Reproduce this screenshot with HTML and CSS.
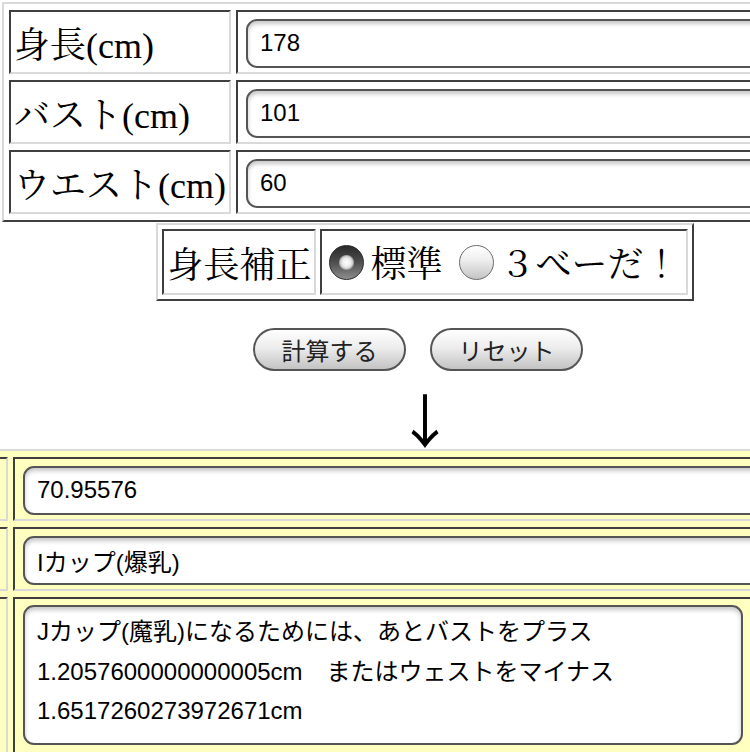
FILE: index.html
```html
<!DOCTYPE html>
<html lang="ja">
<head>
<meta charset="utf-8">
<title>カップ計算</title>
<link rel="stylesheet" href="styles.css">
</head>
<body>
<div class="page">
  <table class="grid input-table">
    <tr>
      <td class="label">身長(cm)</td>
      <td class="field"><input class="box" type="text" value="178"></td>
    </tr>
    <tr>
      <td class="label">バスト(cm)</td>
      <td class="field"><input class="box" type="text" value="101"></td>
    </tr>
    <tr>
      <td class="label">ウエスト(cm)</td>
      <td class="field"><input class="box" type="text" value="60"></td>
    </tr>
  </table>

  <table class="grid mode-table">
    <tr>
      <td class="mode-label">身長補正</td>
      <td class="mode-options"><label class="opt"><input class="radio" type="radio" name="mode" checked>標準</label> <label class="opt"><input class="radio" type="radio" name="mode">３べーだ！</label></td>
    </tr>
  </table>

  <div class="buttons">
    <button class="btn" type="button">計算する</button>
    <button class="btn" type="button">リセット</button>
  </div>

  <div class="arrow">↓</div>

  <div class="result-wrap">
    <table class="grid result-table">
      <colgroup>
        <col class="c1">
        <col class="c2">
      </colgroup>
      <tr>
        <td class="rlabel"></td>
        <td class="field"><input class="box wide" type="text" value="70.95576"></td>
      </tr>
      <tr>
        <td class="rlabel"></td>
        <td class="field"><input class="box wide" type="text" value="Iカップ(爆乳)"></td>
      </tr>
      <tr>
        <td class="rlabel"></td>
        <td class="field tall"><textarea class="box note" readonly>Jカップ(魔乳)になるためには、あとバストをプラス
1.2057600000000005cm　またはウェストをマイナス
1.6517260273972671cm</textarea></td>
      </tr>
    </table>
  </div>
</div>
</body>
</html>
```

FILE: styles.css
```css
html, body {
  margin: 0;
  padding: 0;
  overflow: hidden;
  background: #ffffff;
}

.page {
  width: 850px;
  display: flex;
  flex-direction: column;
  font-family: "Liberation Serif", "Noto Serif CJK JP", "Noto Sans CJK JP", serif;
  color: #000;
}

.grid {
  border-style: solid;
  border-width: 2px;
  border-color: #d9d9d9 #3f3f3f #3f3f3f #d9d9d9;
}

.grid td {
  border-style: solid;
  border-width: 2px;
  border-color: #3f3f3f #d9d9d9 #d9d9d9 #3f3f3f;
  padding: 0;
  vertical-align: middle;
}

/* top input table */
.input-table {
  align-self: flex-start;
  margin: 2px 0 0 2px;
  border-spacing: 5px 6px;
}

.input-table td {
  height: 60px;
}

.label {
  width: 211px;
  padding: 0 3px !important;
  font-size: 36px;
  white-space: nowrap;
}

.field {
  padding: 0 8px !important;
}

.box {
  display: block;
  box-sizing: border-box;
  width: 600px;
  height: 49px;
  margin: 2px 0 0 0;
  padding: 0 12px;
  border: 2px solid #555;
  border-radius: 11px;
  background: #fff;
  box-shadow: inset 0 3px 4px rgba(0, 0, 0, 0.22);
  font-family: "Liberation Sans", "Noto Sans CJK JP", sans-serif;
  font-size: 24px;
  color: #000;
  outline: none;
}

/* mode table */
.mode-table {
  align-self: center;
  margin-top: 1px;
  border-spacing: 4px;
}

.mode-table td {
  height: 62px;
}

.mode-label {
  padding: 0 3px !important;
  font-size: 36px;
  white-space: nowrap;
}

.mode-options {
  padding: 0 6px 0 0 !important;
  font-size: 36px;
  white-space: nowrap;
}

.opt {
  display: inline-flex;
  align-items: center;
}

.radio {
  appearance: none;
  -webkit-appearance: none;
  width: 35px;
  height: 35px;
  margin: 2px 6px 0 7px;
  border-radius: 50%;
  box-sizing: border-box;
  border: 1.5px solid #6b6b6b;
  background: linear-gradient(#ffffff, #f0f0f0 40%, #c4c4c4);
}

.radio:checked {
  border-color: #2a2a2a;
  background:
    radial-gradient(circle at 50% 50%, #ffffff 0, #eeeeee 4px, #cfcfcf 6px, #a0a0a0 7px, rgba(0,0,0,0) 8px),
    linear-gradient(#2a2a2a, #4e4e4e 50%, #8e8e8e);
}

/* buttons */
.buttons {
  display: flex;
  justify-content: center;
  gap: 24px;
  margin-top: 27px;
  padding-right: 14px;
}

.btn {
  box-sizing: border-box;
  width: 153px;
  height: 43px;
  padding: 0;
  border: 2px solid #555;
  border-radius: 22px;
  background: linear-gradient(#fefefe, #ededed 45%, #d2d2d2 80%, #c4c4c4);
  font-family: "Liberation Sans", "Noto Sans CJK JP", sans-serif;
  font-size: 24px;
  color: #222;
}

/* arrow */
.arrow {
  height: 78px;
  text-align: center;
  font-family: "Noto Sans CJK JP", sans-serif;
  font-size: 58px;
  line-height: 94px;
  overflow: visible;
}

/* result table */
.result-wrap {
  display: block;
  width: 1089px;
  margin-left: -149px;
}

.result-table {
  table-layout: fixed;
  width: 1089px;
  border-spacing: 5px 6px;
  background: #ffffc0;
}

.c1 {
  width: 150px;
}

.c2 {
  width: 920px;
}

.result-table td {
  height: 60px;
  background: #ffffc0;
}

.wide {
  width: 900px;
}

.result-table td.tall {
  height: auto;
  padding: 6px 8px 10px 8px !important;
}

.note {
  width: 720px;
  height: 140px;
  margin: 0;
  padding: 5px 12px;
  line-height: 39.5px;
  resize: none;
  overflow: hidden;
  white-space: pre;
}
```
